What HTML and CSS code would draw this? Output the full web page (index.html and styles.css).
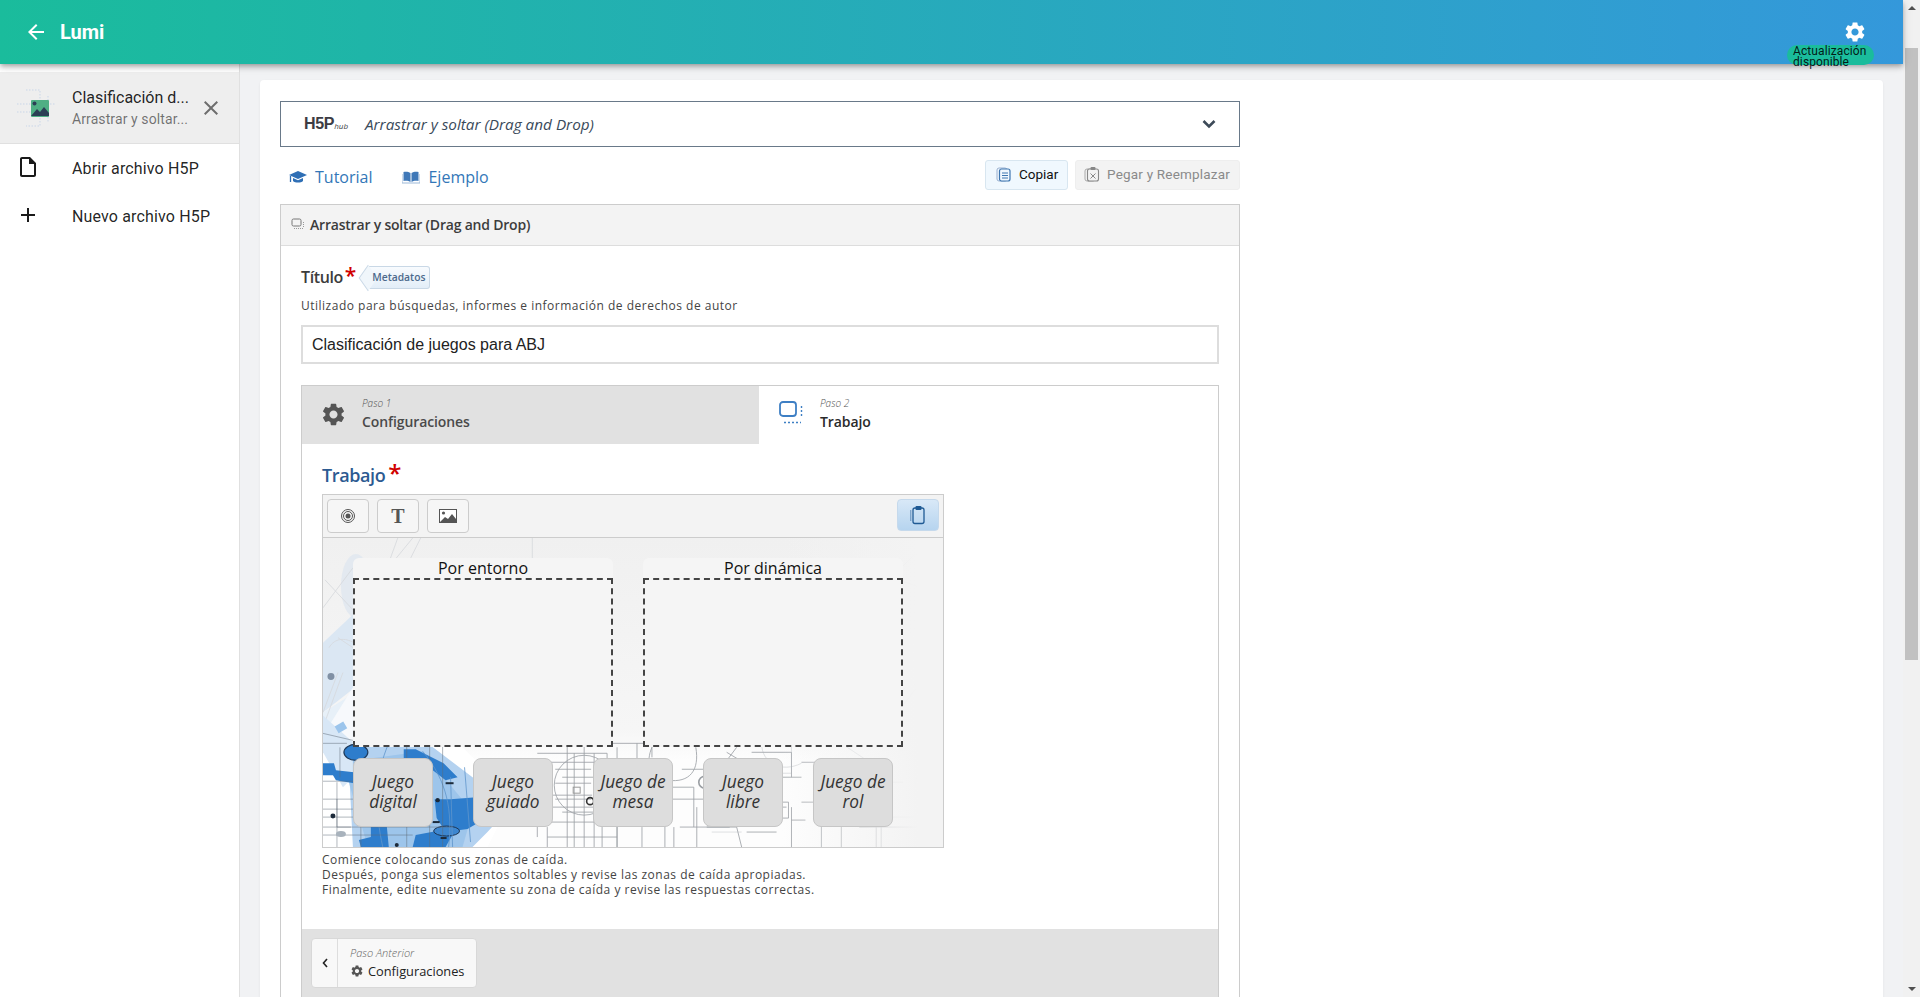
FILE: index.html
```html
<!DOCTYPE html>
<html lang="es">
<head>
<meta charset="utf-8">
<title>Lumi</title>
<link rel="stylesheet" href="styles.css">
</head>
<body>
<div class="app">
  <div class="page">
    <header class="topbar">
      <svg class="back" viewBox="0 0 24 24"><path d="M20 11H7.83l5.59-5.59L12 4l-8 8 8 8 1.41-1.41L7.83 13H20v-2z"/></svg>
      <span class="brand">Lumi</span>
      <span class="spacer"></span>
      <svg class="top-gear" viewBox="0 0 24 24"><path d="M19.14 12.94c.04-.3.06-.61.06-.94 0-.32-.02-.64-.07-.94l2.03-1.58c.18-.14.23-.41.12-.61l-1.92-3.32c-.12-.22-.37-.29-.59-.22l-2.39.96c-.5-.38-1.03-.7-1.62-.94l-.36-2.54c-.04-.24-.24-.41-.48-.41h-3.84c-.24 0-.43.17-.47.41l-.36 2.54c-.59.24-1.13.57-1.62.94l-2.39-.96c-.22-.08-.47 0-.59.22L2.74 8.87c-.12.21-.08.47.12.61l2.03 1.58c-.05.3-.09.63-.09.94s.02.64.07.94l-2.03 1.58c-.18.14-.23.41-.12.61l1.92 3.32c.12.22.37.29.59.22l2.39-.96c.5.38 1.03.7 1.62.94l.36 2.54c.05.24.24.41.48.41h3.84c.24 0 .44-.17.47-.41l.36-2.54c.59-.24 1.13-.56 1.62-.94l2.39.96c.22.08.47 0 .59-.22l1.92-3.32c.12-.22.07-.47-.12-.61l-2.01-1.58zM12 15.6c-1.98 0-3.6-1.62-3.6-3.6s1.62-3.6 3.6-3.6 3.6 1.62 3.6 3.6-1.62 3.6-3.6 3.6z"/></svg>
      <span class="badge">Actualización disponible</span>
    </header>
    <div class="content">
      <aside class="sidebar">
        <div class="side-file">
          <svg class="file-thumb" viewBox="0 0 40 40">
            <g fill="none" stroke="#c9d6e8" stroke-width="1" stroke-dasharray="1.5 1.5"><path d="M1 16h39M1 24h19M10 2h14v36H10M32 8v26"/></g>
            <rect x="15" y="12" width="18" height="17" rx="1" fill="#4faf84"/>
            <circle cx="18.5" cy="15.5" r="2" fill="#2b3f55"/>
            <path d="M15 28l6-7 3 3 4-5 5 6v3z" fill="#2b3f55"/>
          </svg>
          <div class="file-text">
            <div class="file-title">Clasificación d...</div>
            <div class="file-sub">Arrastrar y soltar...</div>
          </div>
          <svg class="file-close" viewBox="0 0 24 24"><path d="M19 6.41L17.59 5 12 10.59 6.41 5 5 6.41 10.59 12 5 17.59 6.41 19 12 13.41 17.59 19 19 17.59 13.41 12z"/></svg>
        </div>
        <div class="side-item">
          <svg class="side-icon" viewBox="0 0 24 24"><path d="M14 2H6c-1.1 0-1.99.9-1.99 2L4 20c0 1.1.89 2 1.99 2H18c1.1 0 2-.9 2-2V8l-6-6zM6 20V4h7v5h5v11H6z"/></svg>
          <span>Abrir archivo H5P</span>
        </div>
        <div class="side-item">
          <svg class="side-icon" viewBox="0 0 24 24"><path d="M19 13h-6v6h-2v-6H5v-2h6V5h2v6h6v2z"/></svg>
          <span>Nuevo archivo H5P</span>
        </div>
      </aside>
      <main class="main">
        <section class="card">
          <div class="editor">
            <div class="hub">
              <span class="hub-logo">H5P<small>hub</small></span>
              <span class="hub-title">Arrastrar y soltar (Drag and Drop)</span>
              <svg class="hub-chev" viewBox="0 0 14 10"><path d="M1.5 2l5.5 5.5L12.500 2" fill="none" stroke="#3d4a58" stroke-width="2.600"/></svg>
            </div>
            <div class="links">
              <a class="link">
                <svg class="link-icon" viewBox="0 0 18 14"><path d="M9 1L0 5l9 4 9-4z" fill="#2f6fb5"/><path d="M4 8v3c2 2 8 2 10 0V8l-5 2.200z" fill="#2f6fb5"/><path d="M1.500 6v6" stroke="#2f6fb5" stroke-width="1.300"/></svg>
                Tutorial
              </a>
              <a class="link">
                <svg class="link-icon" viewBox="0 0 18 14"><path d="M8.500 3C6.500 1.500 3.500 1.500 1.500 2v9c2-.5 5-.5 7 1zM9.500 3c2-1.500 5-1.500 7-1v9c-2-.5-5-.5-7 1z" fill="#3f78b8"/><path d="M0 4v9h18V4" fill="none" stroke="#9db9d8"/></svg>
                Ejemplo
              </a>
              <span class="spacer"></span>
              <button class="copy">
                <svg class="btn-icon" viewBox="0 0 16 16"><rect x="1" y="2" width="10" height="13" rx="2" fill="none" stroke="#9ab0d0"/><rect x="3.500" y="3" width="10.500" height="12" rx="2" fill="#f0f8fe" stroke="#3e76b0" stroke-width="1.200"/><path d="M6 7h6M6 9.500h6M6 12h6" stroke="#3e76b0"/></svg>
                Copiar
              </button>
              <button class="paste">
                <svg class="btn-icon" viewBox="0 0 16 16"><rect x="1" y="3" width="10" height="12" rx="2" fill="none" stroke="#aaa"/><rect x="3.500" y="3" width="11" height="12" rx="2" fill="#f3f3f3" stroke="#888" stroke-width="1.100"/><rect x="6.500" y="1" width="5" height="3" rx="1" fill="#888"/><path d="M6.500 7.500l5 5M11.500 7.500l-5 5" stroke="#888"/></svg>
                Pegar y Reemplazar
              </button>
            </div>
            <div class="group">
              <div class="group-head">
                <svg class="group-icon" viewBox="0 0 14 12"><rect x="1" y="1" width="9" height="7" rx="1.500" fill="none" stroke="#777"/><path d="M3 10.500h9M12.500 4v6" stroke="#999" stroke-dasharray="1 1"/></svg>
                Arrastrar y soltar (Drag and Drop)
              </div>
              <div class="group-body">
                <div class="title-row">
                  <span class="field-label">Título</span><span class="req">*</span>
                  <span class="meta">Metadatos</span>
                </div>
                <div class="field-desc">Utilizado para búsquedas, informes e información de derechos de autor</div>
                <div class="text-input">Clasificación de juegos para ABJ</div>
                <div class="wizard">
                  <div class="tabs">
                    <div class="tab tab-off">
                      <svg class="tab-gear" viewBox="0 0 24 24"><path d="M19.14 12.94c.04-.3.06-.61.06-.94 0-.32-.02-.64-.07-.94l2.03-1.58c.18-.14.23-.41.12-.61l-1.92-3.32c-.12-.22-.37-.29-.59-.22l-2.39.96c-.5-.38-1.03-.7-1.62-.94l-.36-2.54c-.04-.24-.24-.41-.48-.41h-3.84c-.24 0-.43.17-.47.41l-.36 2.54c-.59.24-1.13.57-1.62.94l-2.39-.96c-.22-.08-.47 0-.59.22L2.74 8.87c-.12.21-.08.47.12.61l2.03 1.58c-.05.3-.09.63-.09.94s.02.64.07.94l-2.03 1.58c-.18.14-.23.41-.12.61l1.92 3.32c.12.22.37.29.59.22l2.39-.96c.5.38 1.03.7 1.62.94l.36 2.54c.05.24.24.41.48.41h3.84c.24 0 .44-.17.47-.41l.36-2.54c.59-.24 1.13-.56 1.62-.94l2.39.96c.22.08.47 0 .59-.22l1.92-3.32c.12-.22.07-.47-.12-.61l-2.01-1.58zM12 15.6c-1.98 0-3.6-1.62-3.6-3.6s1.62-3.6 3.6-3.6 3.6 1.62 3.6 3.6-1.62 3.6-3.6 3.6z"/></svg>
                      <div class="tab-text"><em>Paso 1</em><strong>Configuraciones</strong></div>
                    </div>
                    <div class="tab tab-on">
                      <svg class="tab-drag" viewBox="0 0 24 24"><rect x="1" y="1" width="16" height="14" rx="3" fill="none" stroke="#3e7fc4" stroke-width="1.800"/><path d="M22.500 5v12M5 21.500h17" fill="none" stroke="#3e7fc4" stroke-width="1.400" stroke-dasharray="2 2"/></svg>
                      <div class="tab-text"><em>Paso 2</em><strong>Trabajo</strong></div>
                    </div>
                  </div>
                  <div class="step">
                    <div class="step-label">Trabajo<span class="req">*</span></div>
                    <div class="dnd">
                      <div class="toolbar">
                        <button class="tool"><svg class="tool-icon" viewBox="0 0 16 16"><circle cx="8" cy="8" r="6.500" fill="none" stroke="#555"/><circle cx="8" cy="8" r="4.500" fill="none" stroke="#555"/><circle cx="8" cy="8" r="2.500" fill="#555"/></svg></button>
                        <button class="tool tool-t">T</button>
                        <button class="tool"><svg class="tool-pic" viewBox="0 0 18 14"><rect x=".5" y=".5" width="17" height="13" fill="#fff" stroke="#555"/><circle cx="4.500" cy="4" r="1.600" fill="#555"/><path d="M1 13l5-5 3 2 4-5 4 5v3z" fill="#555"/></svg></button>
                        <span class="spacer"></span>
                        <button class="tool tool-paste"><svg class="tool-clip" viewBox="0 0 16 20"><rect x="3" y="3" width="11" height="15.500" rx="2" fill="none" stroke="#1f5a94" stroke-width="1.300"/><rect x="5.500" y="1" width="6" height="4" rx="1" fill="#1f5a94"/><path d="M.8 5v11" stroke="#5e8ab8"/></svg></button>
                      </div>
                      <div class="stage">
                        <svg class="stage-art" viewBox="0 0 622 310" preserveAspectRatio="none">
                          <defs>
                            <linearGradient id="fade" x1="0" y1="0" x2="0" y2="1"><stop offset="0" stop-color="#f0f0f0"/><stop offset=".62" stop-color="#f6f6f6"/><stop offset=".72" stop-color="#fdfdfd"/></linearGradient>
                            <linearGradient id="rightfade" x1="0" y1="0" x2="1" y2="0"><stop offset=".74" stop-color="#f3f3f3" stop-opacity="0"/><stop offset=".96" stop-color="#f3f3f3"/></linearGradient>
                          </defs>
                          <rect width="622" height="310" fill="url(#fade)"/>
                          <g fill="none" stroke="#6f757c" stroke-width=".8" opacity=".7">
                            <path d="M215 206h330M215 216h70v30M225 225h55v50h-40M240 240h40M210 258h60M205 285h90v25M245 206v104M262 206v104M280 240v70M295 210v100M225 290v20M300 225h40v12M315 206v30M330 206v14M233 232h36M233 246h36M233 262h36M252 216v94M272 216v94M225 300h70M205 270h70M215 240v60M305 262h38M305 276h38v34M320 290v20"/>
                            <circle cx="262" cy="248" r="30"/>
                            <path d="M330 210c-6 14-4 30 16 33 22 3 32-10 28-33"/>
                            <path d="M340 250h32v40M345 262h60v8M360 232h48v14M358 290h50M352 290v20M375 270v40M385 290h30l5 20M390 250h16v20h-16M405 215l25 15M415 210l-15 20M440 240h40M480 225h20v40h-20M500 250v60M470 270v40M520 270h40v40M520 310v-35M538 290h60M555 250v60M430 215h40v25M445 270h20M425 295h30"/>
                            <circle cx="383" cy="245" r="6" stroke-width="1.600"/>
                            <path d="M470 283h14M455 265h12v16h-12"/>
                          </g>
                          <g fill="none" stroke="#a8adb3" stroke-width=".8" opacity=".45">
                            <path d="M410 206h60v30h-20M440 206c0 20 20 30 40 20M520 206l30 20M500 240h30M560 245h22M390 295h30M570 280h30"/>
                            <circle cx="561" cy="245" r="6"/>
                            <path d="M584 150l-22 32M592 155l-24 30M600 145l-10 12"/>
                            <circle cx="596" cy="148" r="2"/>
                            <path d="M612 28l-18-12-14 14 3 14 18 6z"/>
                            <circle cx="600" cy="245" r="6"/>
                          </g>
                          <rect width="622" height="310" fill="url(#rightfade)"/>
                          <ellipse cx="33" cy="48" rx="15" ry="32" fill="#e3e9f0"/>
                          <path d="M0 105L32 75V150L0 175z" fill="#dbe7f3"/>
                          <path d="M0 175L32 155V205L20 212L0 180z" fill="#e7f0f8"/>
                          <path d="M2 195L30 150V205z" fill="#f7f9fc"/>
                          <g fill="none" stroke="#d5d8dc" stroke-width=".8">
                            <path d="M30 30L0 70M2 42L30 72M75 0l-8 22M90 0l-18 22M98 0l-10 20M210 0v40"/>
                            <path d="M6 110c6-10 16-10 25-5M15 100l15 10"/>
                            <path d="M0 175l15-40M0 190l20-55"/>
                          </g>
                          <path d="M0 206h18L80 205l60 5 50 50-25 50H0z" fill="#fff"/>
                          <path d="M25 210L105 206L150 240L172 250L195 262L165 295L150 310H30z" fill="#b4d2f0"/>
                          <path d="M20 225L100 214L150 275L140 310H45z" fill="#97c2ea" opacity=".8"/>
                          <path d="M0 178L30 205V240L20 250L0 215z" fill="#d8e7f6"/>
                          <ellipse cx="33" cy="215" rx="12" ry="8" fill="#2e7dcc" stroke="#1f3a5a" stroke-width="1.200"/>
                          <path d="M0 226h11l2 7 18 2 0 11-18-3-3-5H0z" fill="#2e7dcc"/>
                          <path d="M81 212h12l28 14 14 14-12 3-18-14-24-4z" fill="#2e7dcc"/>
                          <path d="M112 262h16l26-2 3 25-12 7-22 3-9-14z" fill="#2e7dcc"/>
                          <path d="M48 290l16-1 2 21H38l-2-7 12-3z" fill="#2e7dcc"/>
                          <path d="M93 298l32-6 6 4-8 14H90z" fill="#2e7dcc"/>
                          <ellipse cx="124" cy="294" rx="13" ry="5" fill="#3d86cf" stroke="#1d3553"/>
                          <path d="M128 240l2 70M142 230l6 75M100 214c25 30 30 60 26 96M66 206c-14 30-14 70-6 104" fill="none" stroke="#5f95cc" stroke-width=".8"/>
                          <rect x="13" y="186" width="10" height="8" fill="#9cc5ec" transform="rotate(-30 18 190)"/>
                          <g fill="none" stroke="#5f6b78" stroke-width=".7" opacity=".7">
                            <path d="M0 244h34M0 262h14v28h14M0 280h30M0 290h130M14 262h16M14 245v65M38 250v60M84 206v104M107 208v102M120 208v102M0 298h90M0 272h30M17 240v-30"/>
                            <path d="M0 196l30 7M0 206h24"/>
                          </g>
                          <g fill="#1c2a3a"><circle cx="10" cy="279" r="2.500"/><circle cx="115" cy="263" r="2.200"/><circle cx="74" cy="308" r="2"/><rect x="123" y="245" width="8" height="2"/><rect x="118" y="300" width="6" height="2"/><rect x="110" y="284" width="7" height="2"/></g>
                          <circle cx="8" cy="139" r="3.500" fill="#8090a4"/>
                          <ellipse cx="18" cy="297" rx="5" ry="3" fill="#a8b2bc"/>
                          <circle cx="268" cy="264" r="3.500" fill="none" stroke="#333" stroke-width="1.600"/>
                          <rect x="251" y="250" width="7" height="6" fill="none" stroke="#999"/>
                          <rect x="441" y="278" width="4" height="7" fill="#bbb"/>
                        </svg>
                        <div class="zone zone-a"><div class="zone-label">Por entorno</div></div>
                        <div class="zone zone-b"><div class="zone-label">Por dinámica</div></div>
                        <div class="drag drag-1">Juego<br>digital</div>
                        <div class="drag drag-2">Juego<br>guiado</div>
                        <div class="drag drag-3">Juego de<br>mesa</div>
                        <div class="drag drag-4">Juego<br>libre</div>
                        <div class="drag drag-5">Juego de<br>rol</div>
                      </div>
                    </div>
                    <p class="help">Comience colocando sus zonas de caída.<br>Después, ponga sus elementos soltables y revise las zonas de caída apropiadas.<br>Finalmente, edite nuevamente su zona de caída y revise las respuestas correctas.</p>
                  </div>
                  <div class="wizard-foot">
                    <div class="prev">
                      <span class="prev-arrow"><svg class="prev-chev" viewBox="0 0 6 10"><path d="M5 1L1.500 5 5 9" fill="none" stroke="#222" stroke-width="1.600"/></svg></span>
                      <div class="prev-text">
                        <em>Paso Anterior</em>
                        <span class="prev-name"><svg class="prev-gear" viewBox="0 0 24 24"><path d="M19.14 12.94c.04-.3.06-.61.06-.94 0-.32-.02-.64-.07-.94l2.03-1.58c.18-.14.23-.41.12-.61l-1.92-3.32c-.12-.22-.37-.29-.59-.22l-2.39.96c-.5-.38-1.03-.7-1.62-.94l-.36-2.54c-.04-.24-.24-.41-.48-.41h-3.84c-.24 0-.43.17-.47.41l-.36 2.54c-.59.24-1.13.57-1.62.94l-2.39-.96c-.22-.08-.47 0-.59.22L2.74 8.87c-.12.21-.08.47.12.61l2.03 1.58c-.05.3-.09.63-.09.94s.02.64.07.94l-2.03 1.58c-.18.14-.23.41-.12.61l1.92 3.32c.12.22.37.29.59.22l2.39-.96c.5.38 1.03.7 1.62.94l.36 2.54c.05.24.24.41.48.41h3.84c.24 0 .44-.17.47-.41l.36-2.54c.59-.24 1.13-.56 1.62-.94l2.39.96c.22.08.47 0 .59-.22l1.92-3.32c.12-.22.07-.47-.12-.61l-2.01-1.58zM12 15.6c-1.98 0-3.6-1.62-3.6-3.6s1.62-3.6 3.6-3.6 3.6 1.62 3.6 3.6-1.62 3.6-3.6 3.6z"/></svg>Configuraciones</span>
                      </div>
                    </div>
                  </div>
                </div>
              </div>
            </div>
          </div>
        </section>
      </main>
    </div>
  </div>
  <div class="scrollbar">
    <span class="arrow-up"></span>
    <span class="thumb"></span>
    <span class="arrow-down"></span>
  </div>
</div>
</body>
</html>
```
FILE: styles.css
```css
* { box-sizing: border-box; }
html, body { margin: 0; height: 100%; overflow: hidden; }
body { font-family: Roboto, "Liberation Sans", sans-serif; color: rgba(0,0,0,.87); background: #f1f2f4; }
button { font: inherit; padding: 0; margin: 0; }
.spacer { flex: 1; }
.app { display: flex; height: 997px; overflow: hidden; }
.page { flex: 1; min-width: 0; display: flex; flex-direction: column; }

.topbar { position: relative; z-index: 3; flex: none; height: 64px; display: flex; align-items: center; padding-left: 24px; padding-right: 36px; background: linear-gradient(90deg, #1abc9c, #3498db); box-shadow: 0 2px 4px -1px rgba(0,0,0,.2), 0 4px 5px rgba(0,0,0,.14), 0 1px 10px rgba(0,0,0,.12); color: #fff; }
.back { width: 24px; height: 24px; fill: #fff; }
.brand { margin-left: 12px; font-size: 20px; font-weight: 700; }
.top-gear { width: 24px; height: 24px; fill: #fff; }
.badge { position: absolute; left: 1787px; top: 45px; width: 87px; height: 20px; padding: 1px 6px 0; border-radius: 10px; background: #1abc9c; color: rgba(0,0,0,.87); font-size: 12px; line-height: 11px; letter-spacing: .1px; }

.content { flex: 1; min-height: 0; display: flex; }
.sidebar { flex: none; width: 240px; padding-top: 8px; background: #fff; border-right: 1px solid #e0e0e0; }
.side-file { height: 72px; display: flex; align-items: center; padding-left: 16px; background: #eee; border-bottom: 1px solid #e0e0e0; }
.file-thumb { flex: none; width: 40px; height: 40px; }
.file-text { width: 122px; margin-left: 16px; }
.file-title { font-size: 16px; line-height: 24px; color: rgba(0,0,0,.87); white-space: nowrap; }
.file-sub { font-size: 14px; line-height: 20px; margin-top: -1px; color: rgba(0,0,0,.54); white-space: nowrap; letter-spacing: .1px; }
.file-close { flex: none; width: 24px; height: 24px; margin-left: 5px; fill: rgba(0,0,0,.54); }
.side-item { height: 48px; display: flex; align-items: center; padding-left: 16px; font-size: 16px; letter-spacing: .15px; color: rgba(0,0,0,.87); }
.side-icon { flex: none; width: 24px; height: 24px; margin-right: 32px; margin-top: -3px; fill: #1a1a1a; }

.main { flex: 1; min-width: 0; padding: 16px 20px 0; overflow: hidden; }
.card { background: #fff; border-radius: 4px; padding: 21px 20px 0; min-height: 1000px; box-shadow: 0 1px 3px rgba(0,0,0,.06); }
.editor { width: 960px; font-family: "Open Sans", sans-serif; }

.hub { height: 46px; display: flex; align-items: center; border: 1px solid #697989; padding: 0 23px; }
.hub-logo { width: 61px; font-family: "Liberation Sans", sans-serif; font-size: 16px; font-weight: 700; color: #3c3c44; letter-spacing: -.3px; }
.hub-logo small { font-family: "Open Sans", sans-serif; font-size: 8px; font-weight: 400; font-style: italic; letter-spacing: 0; }
.hub-title { flex: 1; font-size: 15.3px; font-style: italic; color: #3a4a5a; }
.hub-chev { width: 14px; height: 10px; }

.links { height: 57px; display: flex; align-items: center; padding-left: 9px; padding-top: 2px; }
.link { display: flex; align-items: center; font-size: 16px; color: #3377b8; margin-right: 30px; }
.link-icon { width: 18px; height: 14px; margin-right: 8px; }
.copy, .paste { height: 30px; display: flex; align-items: center; border-radius: 3px; font-family: Roboto, sans-serif; font-size: 13.5px; margin-bottom: 4px; padding-bottom: 2px; }
.copy { width: 83px; padding-left: 10px; background: #f0f8fe; border: 1px solid #d8e6f0; color: #111; margin-right: 7px; }
.paste { width: 165px; padding-left: 8px; background: #f3f3f3; border: 1px solid #eee; color: #8a8a8a; letter-spacing: .2px; }
.btn-icon { width: 16px; height: 16px; margin-right: 7px; }

.group { border: 1px solid #ccc; border-bottom: 0; }
.group-head { height: 41px; display: flex; align-items: center; padding-left: 10px; padding-bottom: 2px; background: #f3f3f3; border-bottom: 1px solid #ddd; font-size: 14px; font-weight: 600; color: #3c3c3c; letter-spacing: -.2px; }
.group-icon { width: 14px; height: 12px; margin-right: 5px; }
.group-body { padding: 18px 20px 0; }
.title-row { height: 26px; display: flex; align-items: center; }
.field-label { font-size: 16px; font-weight: 600; color: #3c3c3c; letter-spacing: -.4px; }
.req { color: #d00000; font-size: 21px; line-height: 12px; align-self: flex-start; margin: 5px 0 0 2px; font-weight: 600; }
.meta { position: relative; z-index: 0; margin-left: 11px; height: 23px; width: 63px; padding-left: 1px; text-align: center; background: linear-gradient(#f8fbfe, #e3eef8); border: 1px solid #c9d8e6; border-left: 0; border-radius: 0 3px 3px 0; font-size: 10.3px; font-weight: 600; line-height: 21px; color: #4d6a8c; }
.meta::before { content: ""; position: absolute; left: -7px; top: 3px; width: 15px; height: 15px; transform: rotate(45deg) skew(10deg, 10deg); background: #f0f6fb; border-left: 1px solid #c9d8e6; border-bottom: 1px solid #c9d8e6; z-index: -1; }
.field-desc { margin-top: 8px; font-size: 12px; line-height: 16px; letter-spacing: .5px; color: #444; }
.text-input { margin-top: 11px; height: 39px; border: 2px solid #ddd; padding-left: 9px; font-family: "Liberation Sans", sans-serif; font-size: 16px; line-height: 35px; color: #222; }

.wizard { margin-top: 21px; border: 1px solid #ccc; border-bottom: 0; }
.tabs { display: flex; height: 58px; }
.tab { display: flex; align-items: center; }
.tab-off { width: 457px; background: #e1e1e1; color: #4a4a4a; padding-left: 18px; }
.tab-on { flex: 1; color: #2a2a2a; padding-left: 20px; }
.tab-gear { width: 27px; height: 27px; fill: #555; margin-right: 15px; margin-top: -2px; flex: none; }
.tab-drag { width: 24px; height: 24px; margin-right: 17px; margin-top: -4px; flex: none; }
.tab-text { display: flex; flex-direction: column; margin-top: -1px; }
.tab-text em { font-size: 10px; line-height: 14px; margin-bottom: 1px; color: #555; font-weight: 300; }
.tab-text strong { font-size: 14px; line-height: 22px; font-weight: 600; letter-spacing: -.1px; }

.step { padding: 19px 20px 0; height: 485px; }
.step-label { font-size: 18px; font-weight: 600; line-height: 24px; color: #2c5a91; letter-spacing: -.4px; display: flex; }
.step-label .req { font-size: 24px; margin: 4px 0 0 3px; }
.dnd { width: 622px; margin-top: 7px; }
.toolbar { height: 44px; display: flex; align-items: flex-start; padding: 4px 4px; gap: 8px; background: #f3f3f3; border: 1px solid #ccc; }
.tool { width: 42px; height: 34px; border: 1px solid #ccc; border-radius: 4px; background: #f6f6f6; display: flex; align-items: center; justify-content: center; }
.tool-t { font-family: "Liberation Serif", serif; font-weight: 700; font-size: 20px; color: #555; }
.tool-icon { width: 16px; height: 16px; }
.tool-pic { width: 18px; height: 14px; }
.tool-paste { height: 32px; background: linear-gradient(#d8e8f7, #b6d4ef); border-color: #c5d9ec; }
.tool-clip { width: 16px; height: 20px; }
.stage { position: relative; height: 310px; border: 1px solid #ccc; border-top: 0; }
.stage-art { display: block; position: absolute; left: 0; top: 0; width: 100%; height: 100%; }
.zone { position: absolute; top: 40px; width: 260px; height: 169px; border: 2px dashed #444; background: #f5f5f5; }
.zone-a { left: 30px; }
.zone-b { left: 320px; }
.zone-label { position: absolute; left: -2px; right: -2px; top: -22px; height: 20px; background: #f5f5f5; border-radius: 6px 6px 0 0; text-align: center; font-size: 16px; line-height: 20px; color: #111; }
.drag { position: absolute; top: 220px; width: 80px; height: 69px; padding-top: 13px; border: 1px solid #c6c6c6; border-radius: 8px; background: #ddd; text-align: center; font-size: 17.3px; font-style: italic; line-height: 20px; color: #333; white-space: nowrap; }
.drag-1 { left: 30px; }
.drag-2 { left: 150px; }
.drag-3 { left: 270px; }
.drag-4 { left: 380px; }
.drag-5 { left: 490px; }
.help { margin: 4px 0 0; font-size: 12px; line-height: 15px; letter-spacing: .5px; color: #444; }

.wizard-foot { height: 120px; padding: 9px 9px; background: #e1e1e1; }
.prev { width: 166px; height: 50px; display: flex; background: #f8f8f8; border: 1px solid #d8d8d8; border-radius: 4px; }
.prev-arrow { width: 26px; display: flex; align-items: center; justify-content: center; border-right: 1px solid #ddd; }
.prev-chev { width: 6px; height: 10px; }
.prev-text { padding-left: 12px; display: flex; flex-direction: column; }
.prev-text em { font-size: 11px; line-height: 16px; margin-top: 6px; color: #666; font-weight: 300; }
.prev-name { display: flex; align-items: center; font-size: 12.8px; line-height: 20px; color: #222; }
.prev-gear { width: 14px; height: 14px; fill: #555; margin-right: 4px; }

.scrollbar { flex: none; width: 17px; display: flex; flex-direction: column; align-items: center; background: #f1f1f1; }
.arrow-up { margin-top: 6px; border-left: 4px solid transparent; border-right: 4px solid transparent; border-bottom: 4px solid #505050; }
.thumb { width: 13px; height: 612px; margin-top: 38px; background: #c1c1c1; }
.arrow-down { margin-top: auto; margin-bottom: 6px; border-left: 4px solid transparent; border-right: 4px solid transparent; border-top: 4px solid #505050; }
```
